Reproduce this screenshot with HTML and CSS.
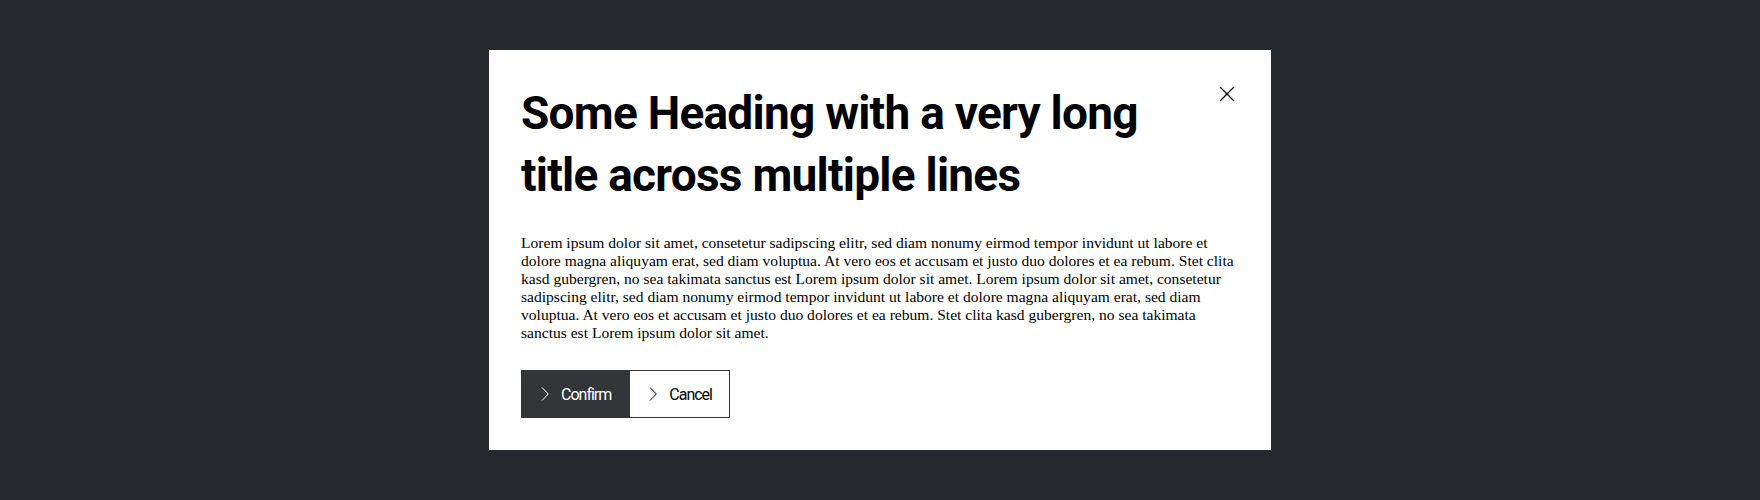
FILE: index.html
```html
<!DOCTYPE html>
<html lang="en">
<head>
<meta charset="utf-8">
<title>Modal</title>
<link rel="stylesheet" href="styles.css">
</head>
<body>
<div class="backdrop">
  <div class="modal" role="dialog" aria-modal="true">
    <div class="modal-header">
      <h2 class="modal-title">Some Heading with a very long title across multiple lines</h2>
      <button class="close" aria-label="Close">
        <svg width="24" height="24" viewBox="0 0 24 24" aria-hidden="true">
          <path d="M5 5 L19 19 M19 5 L5 19" stroke="#010205" stroke-width="1.2" fill="none"/>
        </svg>
      </button>
    </div>
    <p class="modal-text">Lorem ipsum dolor sit amet, consetetur sadipscing elitr, sed diam nonumy eirmod tempor invidunt ut labore et dolore magna aliquyam erat, sed diam voluptua. At vero eos et accusam et justo duo dolores et ea rebum. Stet clita kasd gubergren, no sea takimata sanctus est Lorem ipsum dolor sit amet. Lorem ipsum dolor sit amet, consetetur sadipscing elitr, sed diam nonumy eirmod tempor invidunt ut labore et dolore magna aliquyam erat, sed diam voluptua. At vero eos et accusam et justo duo dolores et ea rebum. Stet clita kasd gubergren, no sea takimata sanctus est Lorem ipsum dolor sit amet.</p>
    <div class="actions">
      <button class="btn btn-primary">
        <svg class="chev" width="20" height="20" viewBox="0 0 20 20" aria-hidden="true">
          <path d="M7 3.5 L13.3 10 L7 16.5" stroke="currentColor" stroke-width="1" fill="none"/>
        </svg>
        <span>Confirm</span>
      </button>
      <button class="btn btn-secondary">
        <svg class="chev" width="20" height="20" viewBox="0 0 20 20" aria-hidden="true">
          <path d="M7 3.5 L13.3 10 L7 16.5" stroke="currentColor" stroke-width="1" fill="none"/>
        </svg>
        <span>Cancel</span>
      </button>
    </div>
  </div>
</div>
</body>
</html>
```

FILE: styles.css
```css
html, body {
  margin: 0;
  padding: 0;
}

body {
  background: #25292d;
}

.backdrop {
  height: 100vh;
  display: flex;
  align-items: center;
  justify-content: center;
}

.modal {
  width: 718px;
  background: #ffffff;
  padding: 32px;
}

.modal-header {
  display: flex;
  align-items: flex-start;
  gap: 24px;
}

.modal-title {
  flex: 1;
  margin: 0;
  padding-right: 40px;
  font-family: Roboto, "Liberation Sans", sans-serif;
  font-weight: 700;
  font-size: 46px;
  line-height: 62px;
  letter-spacing: -0.75px;
  color: #010205;
}

.close {
  flex: none;
  width: 24px;
  height: 24px;
  padding: 0;
  border: 0;
  background: transparent;
  display: flex;
}

.modal-text {
  margin: 28px 0 0 0;
  font-family: "Liberation Serif", serif;
  font-size: 15.57px;
  line-height: 18px;
  color: #000;
}

.actions {
  display: flex;
  margin-top: 28px;
}

.btn {
  display: flex;
  align-items: center;
  height: 48px;
  box-sizing: border-box;
  padding: 0 17px 0 13px;
  gap: 6px;
  font-family: Roboto, "Liberation Sans", sans-serif;
  font-size: 16px;
  letter-spacing: -1px;
  border: 1px solid #323639;
}

.btn-primary {
  background: #323639;
  color: #ffffff;
}

.btn-secondary {
  background: #ffffff;
  color: #010205;
}

.chev {
  flex: none;
}
```
